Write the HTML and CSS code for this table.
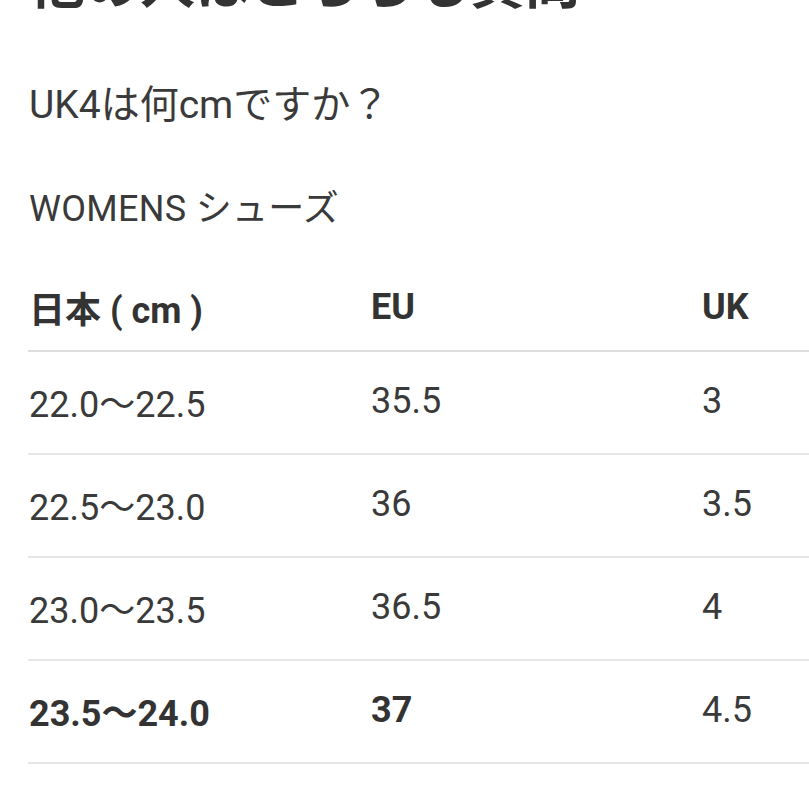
FILE: index.html
```html
<!DOCTYPE html>
<html lang="ja">
<head>
<meta charset="utf-8">
<link rel="stylesheet" href="styles.css">
</head>
<body>
<div class="page">
  <h2 class="title">他の人はこちらも質問</h2>
  <p class="question">UK4は何cmですか？</p>
  <p class="caption">WOMENS シューズ</p>
  <table class="size-table">
    <thead>
      <tr><th class="c1">日本 ( cm )</th><th class="c2">EU</th><th class="c3">UK</th></tr>
    </thead>
    <tbody>
      <tr><td>22.0〜22.5</td><td>35.5</td><td>3</td></tr>
      <tr><td>22.5〜23.0</td><td>36</td><td>3.5</td></tr>
      <tr><td>23.0〜23.5</td><td>36.5</td><td>4</td></tr>
      <tr class="hl"><td class="b">23.5〜24.0</td><td class="b">37</td><td>4.5</td></tr>
    </tbody>
  </table>
</div>
</body>
</html>
```
FILE: styles.css
```css
html, body {
  margin: 0;
  padding: 0;
  background: #fff;
  overflow: hidden;
}
.page {
  padding-left: 28px;
  font-family: Roboto, "Noto Sans CJK JP", sans-serif;
  color: #3a3a3a;
  width: 1100px;
}
.title {
  margin: -44px 0 0 2px;
  font-size: 55px;
  line-height: 56px;
  font-weight: 700;
  color: #333;
}
.question {
  margin: 68px 0 0 1px;
  font-size: 39px;
  line-height: 50px;
}
.caption {
  margin: 56px 0 0 1px;
  font-size: 36px;
  line-height: 46px;
  letter-spacing: 0.3px;
}
.size-table {
  border-collapse: collapse;
  width: 1000px;
  margin-top: 34px;
}
.size-table th,
.size-table td {
  text-align: left;
  padding: 0 0 3px 1px;
  vertical-align: middle;
  font-size: 36px;
}
.size-table th {
  font-weight: 700;
  height: 81px;
  border-bottom: 2px solid #dedede;
  color: #333;
}
.size-table td {
  font-weight: 400;
  height: 98px;
  border-bottom: 2px solid #e6e6e6;
}
.c1 { width: 341px; }
.c2 { width: 330px; }
.size-table td.b {
  font-weight: 700;
  color: #333;
}
```
